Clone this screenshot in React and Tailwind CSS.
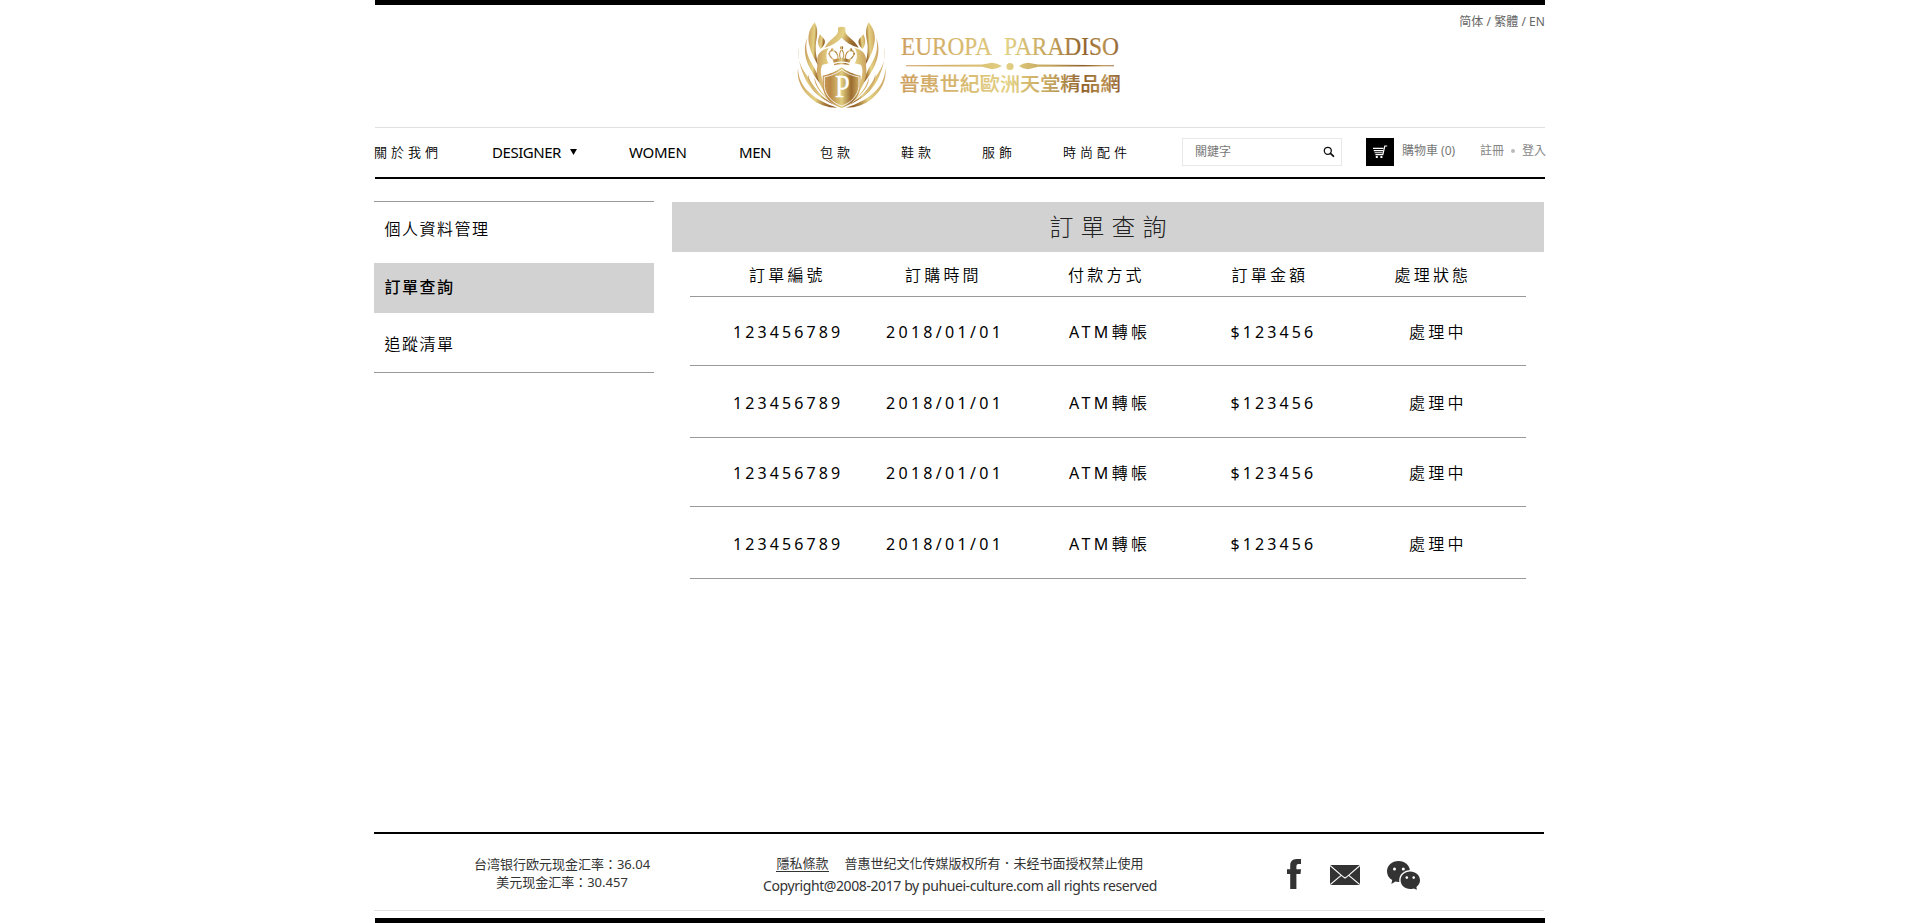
import React from "react";

const leaves = [
  "M68 16C50 38 44 62 54 92C60 116 72 132 80 148C75 128 70 110 71 88C73 62 82 42 68 16Z",
  "M46 62C38 92 46 118 60 140C72 160 80 180 88 204C72 186 58 164 49 144C38 118 34 88 46 62Z",
  "M22 88C14 122 26 150 42 172C60 198 72 222 100 248C76 236 54 214 42 190C26 158 16 124 22 88Z",
  "M18 152C18 186 34 210 54 228C76 248 104 262 136 272C106 272 76 262 55 242C30 220 13 188 18 152Z",
  "M48 172C54 202 80 236 128 264C92 250 64 226 54 202C49 190 47 182 48 172Z",
  "M84 52C76 68 76 82 86 96C93 90 101 80 98 70C96 63 90 60 84 52Z",
  "M110 93C88 97 74 112 76 132C78 150 72 156 76 176C82 206 100 236 134 262C108 232 92 204 88 176C86 160 86 152 92 143L110 139C100 124 102 106 110 93Z",
  "M68 182C74 212 98 242 140 268C112 254 86 232 74 208C69 198 67 190 68 182Z",
];

function Emblem() {
  return (
    <svg viewBox="0 0 300 294" className="h-[98px] w-[100px] shrink-0" aria-hidden="true">
      <defs>
        <linearGradient id="leaf" x1="0" y1="0" x2="1" y2="0.25">
          <stop offset="0" stopColor="#c99a5c" />
          <stop offset="0.35" stopColor="#d9bd72" />
          <stop offset="0.6" stopColor="#e4d184" />
          <stop offset="0.85" stopColor="#a87b3a" />
          <stop offset="1" stopColor="#8f6029" />
        </linearGradient>
        <linearGradient id="shield" x1="0" y1="0" x2="1" y2="0">
          <stop offset="0" stopColor="#c99a58" />
          <stop offset="0.2" stopColor="#b98845" />
          <stop offset="0.5" stopColor="#e0cd80" />
          <stop offset="0.75" stopColor="#9a6c2f" />
          <stop offset="1" stopColor="#d6b56b" />
        </linearGradient>
      </defs>
      <g fill="url(#leaf)">
        {leaves.map((d) => <path key={d} d={d} />)}
      </g>
      <g fill="url(#leaf)" transform="translate(298 0) scale(-1 1)">
        {leaves.map((d) => <path key={d} d={d} />)}
      </g>
      <path
        fill="url(#leaf)"
        d="M138 32Q149 26 160 32V44C164 60 186 66 200 92C178 86 162 76 149 62C136 76 120 86 98 92C112 66 134 60 138 44Z"
      />
      <g fill="none" stroke="url(#shield)" strokeWidth="3.5">
        <path d="M126 128C108 118 108 101 121 101C133 101 139 112 138 127" />
        <path d="M172 128C190 118 190 101 177 101C165 101 159 112 160 127" />
        <path d="M149 98C141 104 141 120 147 127M149 98C157 104 157 120 151 127" />
      </g>
      <g fill="url(#shield)">
        <circle cx="149" cy="92" r="5" />
        <circle cx="121" cy="97" r="3.5" />
        <circle cx="177" cy="97" r="3.5" />
        <circle cx="112" cy="110" r="3" />
        <circle cx="186" cy="110" r="3" />
        <path d="M122 128Q149 120 176 128L173 137Q149 130 125 137Z" />
        <path d="M126 141Q149 134 172 141V145Q149 139 126 145Z" />
        <path d="M149 151C132 164 116 171 92 176V208C94 240 118 264 149 273C180 264 204 240 206 208V176C182 171 166 164 149 151Z" />
      </g>
      <path
        fill="none"
        stroke="#fff"
        strokeWidth="2.5"
        d="M149 158C133 170 118 176 97 180V208C100 236 122 258 149 267C176 258 198 236 201 208V180C180 176 165 170 149 158Z"
      />
      <text x="151" y="240" textAnchor="middle" fill="#fff" stroke="#fff" strokeWidth="1" fontSize="92" fontFamily="Liberation Serif, serif" textLength="44" lengthAdjust="spacingAndGlyphs">P</text>
    </svg>
  );
}

function Wordmark() {
  return (
    <svg viewBox="0 0 224 64" className="h-16 w-[224px] shrink-0">
      <defs>
        <linearGradient id="gold" gradientUnits="userSpaceOnUse" x1="0" y1="0" x2="224" y2="0">
          <stop offset="0" stopColor="#cd9f5f" />
          <stop offset="0.3" stopColor="#d8bb70" />
          <stop offset="0.48" stopColor="#e2d084" />
          <stop offset="0.68" stopColor="#c2a057" />
          <stop offset="0.82" stopColor="#8d6029" />
          <stop offset="0.91" stopColor="#b98e4c" />
          <stop offset="1" stopColor="#84562a" />
        </linearGradient>
      </defs>
      <text x="1" y="23.5" fill="url(#gold)" stroke="url(#gold)" strokeWidth="0.2" fontSize="24.5" fontFamily="Liberation Serif, serif" textLength="91" lengthAdjust="spacingAndGlyphs">EUROPA</text>
      <text x="104" y="23.5" fill="url(#gold)" stroke="url(#gold)" strokeWidth="0.2" fontSize="24.5" fontFamily="Liberation Serif, serif" textLength="115" lengthAdjust="spacingAndGlyphs">PARADISO</text>
      <path fill="url(#gold)" d="M6 34.2L82 33.4L92 31.8L97 32.8L102 35L97 37.2L92 38.2L82 35.8L6 35.2ZM214 34.2L138 33.4L128 31.8L123 32.8L119 35L123 37.2L128 38.2L138 35.8L214 35.2Z" />
      <circle cx="110" cy="35.5" r="3.6" fill="url(#gold)" />
      <text x="-0.5" y="59.5" fill="url(#gold)" stroke="url(#gold)" strokeWidth="0.15" fontSize="19.5" fontWeight="500" fontFamily="Noto Sans CJK TC, sans-serif" textLength="221" lengthAdjust="spacingAndGlyphs">普惠世紀歐洲天堂精品網</text>
    </svg>
  );
}

function SearchIcon() {
  return (
    <svg viewBox="0 0 12 12" className="size-3" aria-hidden="true">
      <circle cx="4.8" cy="4.8" r="3.5" fill="none" stroke="#111" strokeWidth="1.3" />
      <path d="M7.4 7.4L10.4 10.2" stroke="#111" strokeWidth="1.8" strokeLinecap="round" />
    </svg>
  );
}

function CartIcon() {
  return (
    <svg viewBox="0 0 16 14" className="h-3.5 w-4" aria-hidden="true">
      <path d="M15.2 1H12.8L10.8 9.7H3.4" fill="none" stroke="#fff" strokeWidth="1.2" />
      <path d="M1 3.4H11.4M1.8 5.6H11M2.6 7.7H10.6" stroke="#fff" strokeWidth="1.1" />
      <rect x="3.8" y="11" width="2" height="2" fill="#fff" />
      <rect x="8.4" y="11" width="2" height="2" fill="#fff" />
    </svg>
  );
}

function FacebookIcon() {
  return (
    <svg viewBox="0 0 14 30" className="h-[30px] w-3.5" aria-hidden="true">
      <path fill="#333" d="M14 0V5H11.4Q9.4 5 9.4 7V10.2H14L13.5 15H9.4V30H3.2V15H0V10.2H3.2V6.6Q3.2 0 9.4 0Z" />
    </svg>
  );
}

function MailIcon() {
  return (
    <svg viewBox="0 0 30 20" className="h-5 w-[30px]" aria-hidden="true">
      <rect width="30" height="20" fill="#333" />
      <path d="M0 0.4L12.6 11.4L15 13L17.4 11.4L30 0.4M0.2 19.6L11.2 10.4M29.8 19.6L18.8 10.4" fill="none" stroke="#fff" strokeWidth="1.1" />
    </svg>
  );
}

function WechatIcon() {
  return (
    <svg viewBox="0 0 33 29" className="h-[29px] w-[33px]" aria-hidden="true">
      <path fill="#333" d="M11.5 0C18 0 23 4.6 23 10.4S18 20.9 11.5 20.9C10.4 20.9 9.4 20.8 8.4 20.5L4.4 23L5.2 19C2 17.2 0 14 0 10.4C0 4.6 5 0 11.5 0Z" />
      <ellipse cx="23.2" cy="19.2" rx="11" ry="10.2" fill="#fff" />
      <path fill="#333" d="M23.2 10.5C28.6 10.5 33 14.4 33 19.3C33 22 31.6 24.4 29.4 26L29.9 28.8L26.6 27.4C25.5 27.8 24.4 28 23.2 28C17.8 28 13.6 24.2 13.6 19.3S17.8 10.5 23.2 10.5Z" />
      <g fill="#fff">
        <circle cx="7.5" cy="8" r="1.5" />
        <circle cx="16.3" cy="8" r="1.5" />
        <circle cx="19.8" cy="16.6" r="1.3" />
        <circle cx="26.7" cy="16.6" r="1.3" />
      </g>
    </svg>
  );
}

function Header() {
  return (
    <header className="ml-px w-[1170px]">
      <div className="h-[5px] bg-black" />
      <div className="grid h-[122px] grid-cols-[417px_1fr_auto] items-start">
        <div />
        <div className="flex pt-3">
          <Emblem />
          <div className="pl-2 pt-[14px]"><Wordmark /></div>
        </div>
        <div className="pt-2 text-[12px] font-normal leading-[18px] tracking-[0.05px] text-[#666]">简体 / 繁體 / EN</div>
      </div>
      <nav className="flex h-[52px] items-start border-b-2 border-t border-black border-t-[#e0e0e0] whitespace-nowrap">
        <div className="-ml-px flex w-[808px] shrink-0 pt-[13px] text-[13px] leading-[22px] tracking-[4px]">
          <a className="w-[118px]">關於我們</a>
          <a className="flex w-[137px] items-center text-[15px] font-[370] tracking-[-0.45px]">
            DESIGNER
            <svg viewBox="0 0 8 7" className="ml-[9px] h-[6px] w-[7px]" aria-hidden="true"><path d="M0 0H8L4 7Z" /></svg>
          </a>
          <a className="w-[110px] text-[15px] font-[370] tracking-[-0.25px]">WOMEN</a>
          <a className="w-[81px] text-[15px] font-[370] tracking-[-0.45px]">MEN</a>
          <a className="w-[81px]">包款</a>
          <a className="w-[81px]">鞋款</a>
          <a className="w-[81px]">服飾</a>
          <a>時尚配件</a>
        </div>
        <div className="mt-[10px] flex h-7 w-[160px] shrink-0 items-center justify-between border border-[#e8e8e8] pl-3 pr-1.5 text-[12px] font-normal text-[#777]">
          <span className="-mt-px">關鍵字</span>
          <SearchIcon />
        </div>
        <div className="ml-6 mt-[10px] flex h-7 w-7 shrink-0 items-center justify-center bg-black">
          <CartIcon />
        </div>
        <div className="ml-2 mt-[13px] w-[78px] shrink-0 text-[12px] font-normal leading-5 text-[#777]">購物車 (0)</div>
        <div className="mt-[13px] flex shrink-0 items-center text-[12px] font-normal leading-5 text-[#888]">
          註冊
          <span className="mx-[7px] size-1 rounded-full bg-[#bbb]" />
          登入
        </div>
      </nav>
    </header>
  );
}

function Sidebar() {
  return (
    <aside className="-mt-px h-[172px] w-[280px] border-y border-[#999] text-[16px] leading-6 tracking-[1.5px]">
      <div className="h-[61px] pl-[10.5px] pt-[15px]">個人資料管理</div>
      <div className="h-[50px] bg-[#d2d2d2] pl-[10.5px] pt-[11.5px] font-medium">訂單查詢</div>
      <div className="pl-[10.5px] pt-[19px]">追蹤清單</div>
    </aside>
  );
}

const cols = "grid grid-cols-[153px_183px_161.5px_178.5px_1fr] border-b border-[#999] pl-[43px]";
const rowHeights = ["h-[69px] pt-[23px]", "h-[72px] pt-[25px]", "h-[69px] pt-[23px]", "h-[72px] pt-[25px]"];

function Orders() {
  return (
    <section className="w-[872px]">
      <h1 className="h-[50px] bg-[#d2d2d2] pl-[7px] text-center text-[24px] font-light leading-[50px] tracking-[7px] text-[#222]">訂單查詢</h1>
      <div className="mx-[18px] text-[16px] leading-6">
        <div className={cols + " h-[45px] pt-[10.5px] tracking-[3.2px]"}>
          <span className="pl-4">訂單編號</span>
          <span className="pl-[19px]">訂購時間</span>
          <span className="-ml-px">付款方式</span>
          <span className="pl-px">訂單金額</span>
          <span className="-ml-[14.5px]">處理狀態</span>
        </div>
        {rowHeights.map((height, i) => (
          <div key={i} className={cols + " tracking-[3.1px] " + height}>
            <span className="font-[370]">123456789</span>
            <span className="font-[370] tracking-[3.3px]">2018/01/01</span>
            <span className="tracking-[3.4px]"><span className="font-[370]">ATM</span>轉帳</span>
            <span className="font-[370]">$123456</span>
            <span className="tracking-[3.3px]">處理中</span>
          </div>
        ))}
      </div>
    </section>
  );
}

function Footer() {
  return (
    <footer className="w-[1171px] font-normal text-[#333]">
      <div className="flex h-[79px] w-[1170px] items-start border-b border-t-2 border-b-[#e0e0e0] border-t-black text-[13px] whitespace-nowrap">
        <div className="ml-[76px] w-[224px] pt-[20.5px] text-center leading-[18px]">
          <p>台湾银行欧元现金汇率：36.04</p>
          <p>美元现金汇率：30.457</p>
        </div>
        <div className="ml-[66px] w-[440px] pt-[18px] text-center leading-[22px]">
          <p className="flex justify-center gap-4">
            <a className="h-5 border-b border-[#333]">隱私條款</a>
            <span>普惠世纪文化传媒版权所有．未经书面授权禁止使用</span>
          </p>
          <p className="pt-px text-[14px] tracking-[-0.41px]">Copyright@2008-2017 by puhuei-culture.com all rights reserved</p>
        </div>
        <div className="ml-[107px] flex pt-[25px]">
          <FacebookIcon />
          <div className="ml-[29px] pt-1.5"><MailIcon /></div>
          <div className="ml-[27px] pt-0.5"><WechatIcon /></div>
        </div>
      </div>
      <div className="ml-px mt-[7px] h-[5px] bg-black" />
    </footer>
  );
}

export default function App() {
  return (
    <div className="flex h-[923px] flex-col overflow-hidden bg-white pl-[374px] font-[350] text-black [font-family:'Noto_Sans','Noto_Sans_CJK_TC',sans-serif]">
      <Header />
      <main className="flex flex-1 gap-[18px] pt-[23px]">
        <Sidebar />
        <Orders />
      </main>
      <Footer />
    </div>
  );
}
